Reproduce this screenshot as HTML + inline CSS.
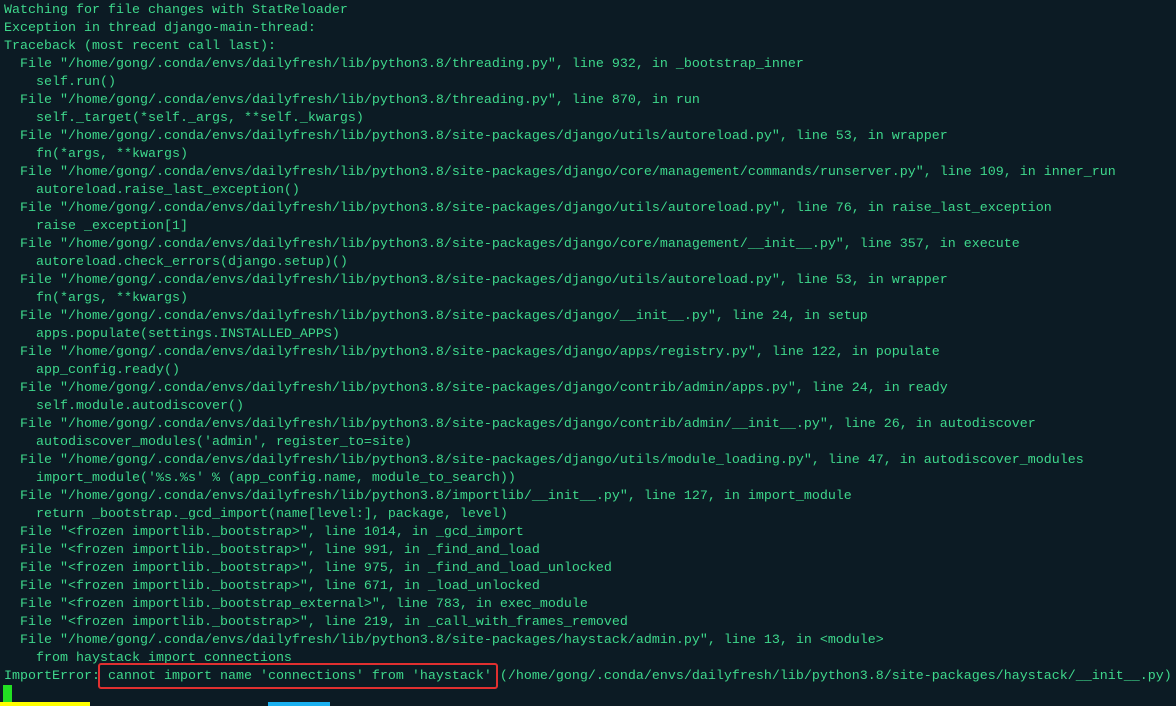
<!DOCTYPE html>
<html><head><meta charset="utf-8"><style>
html,body{margin:0;padding:0;background:#0c1b24;width:1176px;height:706px;overflow:hidden}
pre{margin:0;padding:2px 0 0 4px;font-family:"Liberation Mono",monospace;font-size:13.33px;line-height:18px;color:#3ed88c;white-space:pre}
.box{position:absolute;left:98px;top:663px;width:396px;height:22px;border:2px solid #e03030;border-radius:3px}
.cur{position:absolute;left:3px;top:685px;width:9px;height:17px;background:#22e022}
.y{position:absolute;left:0;top:702px;width:90px;height:4px;background:#ffff00}
.b{position:absolute;left:268px;top:702px;width:62px;height:4px;background:#1ab0f0}
</style></head><body>
<pre>Watching for file changes with StatReloader
Exception in thread django-main-thread:
Traceback (most recent call last):
  File "/home/gong/.conda/envs/dailyfresh/lib/python3.8/threading.py", line 932, in _bootstrap_inner
    self.run()
  File "/home/gong/.conda/envs/dailyfresh/lib/python3.8/threading.py", line 870, in run
    self._target(*self._args, **self._kwargs)
  File "/home/gong/.conda/envs/dailyfresh/lib/python3.8/site-packages/django/utils/autoreload.py", line 53, in wrapper
    fn(*args, **kwargs)
  File "/home/gong/.conda/envs/dailyfresh/lib/python3.8/site-packages/django/core/management/commands/runserver.py", line 109, in inner_run
    autoreload.raise_last_exception()
  File "/home/gong/.conda/envs/dailyfresh/lib/python3.8/site-packages/django/utils/autoreload.py", line 76, in raise_last_exception
    raise _exception[1]
  File "/home/gong/.conda/envs/dailyfresh/lib/python3.8/site-packages/django/core/management/__init__.py", line 357, in execute
    autoreload.check_errors(django.setup)()
  File "/home/gong/.conda/envs/dailyfresh/lib/python3.8/site-packages/django/utils/autoreload.py", line 53, in wrapper
    fn(*args, **kwargs)
  File "/home/gong/.conda/envs/dailyfresh/lib/python3.8/site-packages/django/__init__.py", line 24, in setup
    apps.populate(settings.INSTALLED_APPS)
  File "/home/gong/.conda/envs/dailyfresh/lib/python3.8/site-packages/django/apps/registry.py", line 122, in populate
    app_config.ready()
  File "/home/gong/.conda/envs/dailyfresh/lib/python3.8/site-packages/django/contrib/admin/apps.py", line 24, in ready
    self.module.autodiscover()
  File "/home/gong/.conda/envs/dailyfresh/lib/python3.8/site-packages/django/contrib/admin/__init__.py", line 26, in autodiscover
    autodiscover_modules('admin', register_to=site)
  File "/home/gong/.conda/envs/dailyfresh/lib/python3.8/site-packages/django/utils/module_loading.py", line 47, in autodiscover_modules
    import_module('%s.%s' % (app_config.name, module_to_search))
  File "/home/gong/.conda/envs/dailyfresh/lib/python3.8/importlib/__init__.py", line 127, in import_module
    return _bootstrap._gcd_import(name[level:], package, level)
  File "&lt;frozen importlib._bootstrap&gt;", line 1014, in _gcd_import
  File "&lt;frozen importlib._bootstrap&gt;", line 991, in _find_and_load
  File "&lt;frozen importlib._bootstrap&gt;", line 975, in _find_and_load_unlocked
  File "&lt;frozen importlib._bootstrap&gt;", line 671, in _load_unlocked
  File "&lt;frozen importlib._bootstrap_external&gt;", line 783, in exec_module
  File "&lt;frozen importlib._bootstrap&gt;", line 219, in _call_with_frames_removed
  File "/home/gong/.conda/envs/dailyfresh/lib/python3.8/site-packages/haystack/admin.py", line 13, in &lt;module&gt;
    from haystack import connections
ImportError: cannot import name 'connections' from 'haystack' (/home/gong/.conda/envs/dailyfresh/lib/python3.8/site-packages/haystack/__init__.py)</pre>
<div class="box"></div><div class="cur"></div><div class="y"></div><div class="b"></div>
</body></html>
